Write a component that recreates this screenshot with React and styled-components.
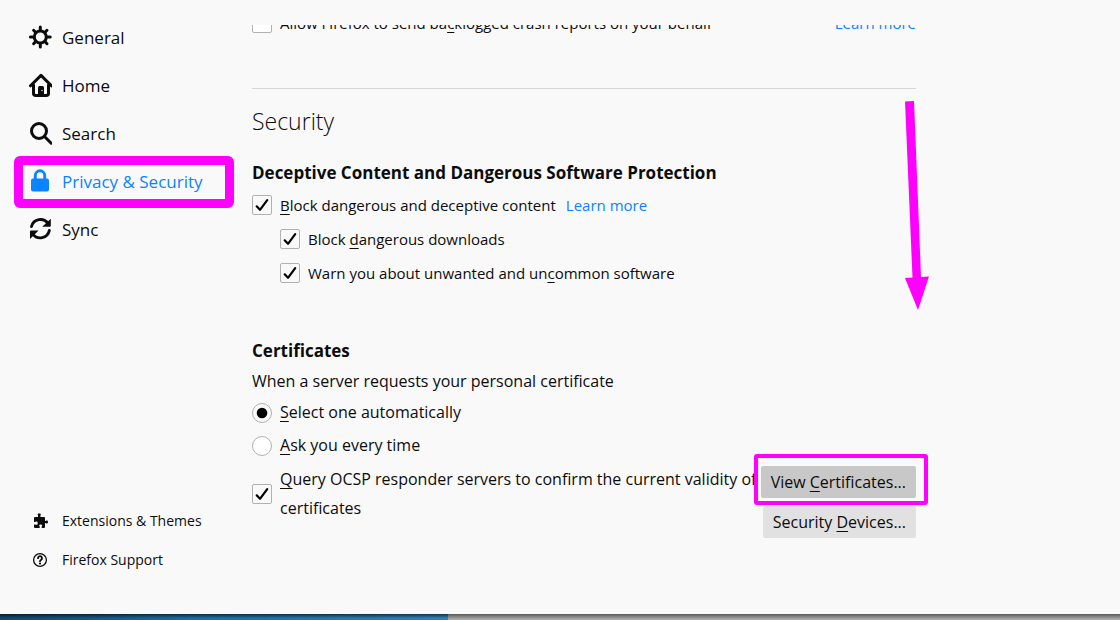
import React from "react";
import styled, { createGlobalStyle } from "styled-components";

const GlobalStyle = createGlobalStyle`
  * { box-sizing: border-box; }
  body {
    margin: 0;
    background: #f9f9fa;
    color: #0c0c0d;
    font-family: "Open Sans", "Noto Sans", sans-serif;
    font-size: 16px;
  }
  h1, h2, p { margin: 0; }
`;

const Page = styled.div`
  display: flex;
  flex-direction: column;
  min-height: 100vh;
`;

const Body = styled.div`
  display: flex;
  flex: 1;
`;

const Sidebar = styled.nav`
  display: flex;
  flex-direction: column;
  flex: 0 0 252px;
  padding: 13px 0 35px 28px;
`;

const NavLink = styled.a`
  position: relative;
  display: flex;
  align-items: center;
  gap: 10px;
  height: 48px;
  font-size: 17px;
  color: ${(p) => (p.$active ? "#0a84ff" : "#0c0c0d")};
  text-decoration: none;
`;

const FooterLinks = styled.div`
  margin-top: auto;
`;

const FooterLink = styled(NavLink)`
  height: 39px;
  font-size: 14px;
`;

const IconSlot = styled.span`
  display: flex;
  justify-content: center;
  width: 24px;
`;

const Highlight = styled.span`
  position: absolute;
  pointer-events: none;
  border: ${(p) => p.$thickness}px solid #ff00ff;
  border-radius: ${(p) => p.$radius}px;
  inset: ${(p) => p.$inset};
`;

const Main = styled.main`
  position: relative;
  flex: 1;
  max-width: 680px;
  margin-top: 25px;
  padding-right: 16px;
  overflow: hidden;
`;

const ScrolledContent = styled.div`
  margin-top: -19px;
`;

const Section = styled.section`
  padding-top: ${(p) => p.$top}px;
`;

const Row = styled.div`
  display: flex;
  align-items: center;
  gap: 10px;
  height: 34px;
  padding-left: ${(p) => (p.$indent ? 28 : 0)}px;
  font-size: 15px;
`;

const RadioRow = styled(Row)`
  height: 33px;
  font-size: 16px;
`;

const Label = styled.label`
  display: flex;
  align-items: center;
  gap: 8px;
  line-height: 29px;
`;

const Link = styled.a`
  color: #0a84ff;
  text-decoration: none;
  margin-left: ${(p) => (p.$end ? "auto" : "0")};
`;

const Key = styled.span`
  text-decoration: underline;
  text-decoration-thickness: 1px;
  text-underline-offset: 3px;
  text-decoration-skip-ink: none;
`;

const Control = styled.span`
  display: grid;
  flex: none;
  place-items: center;
  > * { grid-area: 1 / 1; }
  svg { pointer-events: none; }
`;

const ControlInput = styled.input`
  appearance: none;
  width: 20px;
  height: 20px;
  margin: 0;
  border: 1px solid #b1b1b1;
  border-radius: ${(p) => (p.type === "radio" ? "50%" : "2px")};
  background: #fff;
  & + svg { visibility: hidden; }
  &:checked { background: #f9f9fa; }
  &:checked + svg { visibility: visible; }
`;

const Divider = styled.hr`
  height: 1px;
  margin: 48px 0 0;
  border: 0;
  background: #d7d7db;
`;

const Title = styled.h1`
  padding: 15px 0 19px;
  font-size: 23px;
  font-weight: 300;
  line-height: 34px;
`;

const Heading = styled.h2`
  font-size: 17px;
  font-weight: 700;
  line-height: 31px;
`;

const Note = styled.p`
  line-height: 30px;
`;

const CertificateRow = styled.div`
  display: flex;
  align-items: flex-start;
  justify-content: space-between;
  padding-top: 3px;
`;

const Buttons = styled.div`
  display: flex;
  flex: none;
  flex-direction: column;
  align-items: flex-end;
  gap: 8px;
  padding-top: 1px;
`;

const Button = styled.button`
  position: relative;
  height: 32px;
  padding: 0 10px;
  border: 0;
  border-radius: 2px;
  background: ${(p) => (p.$pressed ? "#c8c8c8" : "#e1e1e2")};
  color: #0c0c0d;
  font: inherit;
`;

const Arrow = styled.svg`
  position: absolute;
  top: 76px;
  right: 3px;
`;

const DesktopEdge = styled.div`
  display: flex;
  height: 6px;
`;

const Wallpaper = styled.div`
  flex: 0 0 40%;
  background: linear-gradient(#0009, #0000 70%), linear-gradient(90deg, #15466b, #1c6da4 45%, #3181b4);
`;

const WindowShadow = styled.div`
  flex: 1;
  background: linear-gradient(#5a5a5a, #b5b3b3);
`;

const GearIcon = () => (
  <svg width="24" height="24" viewBox="0 0 24 24" fill="none" stroke="currentColor" strokeWidth="3" strokeLinecap="round">
    <circle cx="12.3" cy="12" r="6" />
    <path d="M12.3 5V2.1M12.3 19v2.9M5.3 12H2.4M19.3 12h2.9M7.4 7.1 5.6 5.3M17.2 7.1 19 5.3M7.4 16.9l-1.8 1.8M17.2 16.9l1.8 1.8" strokeWidth="3" />
  </svg>
);

const HomeIcon = () => (
  <svg width="24" height="24" viewBox="0 0 24 24" fill="none" stroke="currentColor" strokeLinecap="round" strokeLinejoin="round">
    <path d="M2.5 12.8 13 2.4l10.4 10.4" strokeWidth="3" />
    <path d="M5.500 12v8.200q0 2.300 2.300 2.300h10.400q2.300 0 2.300-2.300V12" strokeWidth="3" />
    <path d="M10 22v-7.500q0-1.500 1.500-1.500h3q1.500 0 1.500 1.500V22z" fill="currentColor" stroke="none" />
    <circle cx="14" cy="17.500" r=".7" fill="#f9f9fa" stroke="none" />
  </svg>
);

const SearchIcon = () => (
  <svg width="24" height="24" viewBox="0 0 24 24" fill="none" stroke="currentColor" strokeWidth="3" strokeLinecap="round">
    <circle cx="11" cy="10" r="7.500" />
    <path d="m16.500 15.500 6.700 6.700" />
  </svg>
);

const LockIcon = () => (
  <svg width="24" height="24" viewBox="0 0 24 24">
    <path d="M7.300 11V6.500a4.700 4.700 0 0 1 9.400 0V11" fill="none" stroke="currentColor" strokeWidth="2.900" />
    <rect x="3" y="9.500" width="18" height="13" rx="2" fill="currentColor" />
  </svg>
);

const SyncIcon = () => (
  <svg width="24" height="24" viewBox="0 0 24 24" fill="none" stroke="currentColor" strokeWidth="2.900" strokeLinecap="round">
    <path d="M3.500 9.500A9.200 9.200 0 0 1 20 6.500M21.300 13.500A9.200 9.200 0 0 1 4.800 17" />
    <path d="M22.800 1.700v7.100q0 1-1 1h-7.600zM2 22v-7.500q0-1 1-1h7.600z" fill="currentColor" stroke="none" />
  </svg>
);

const PuzzleIcon = () => (
  <svg width="16" height="16" viewBox="0 0 16 16" fill="currentColor">
    <path d="M6 4V2.500C5 1 6 .500 7.200.500s2.300.500 1.200 2V4H12q1 0 1 1v3h.6c1.500-1 2.400-.4 2.400 1s-.9 2-2.400 1H13v4q0 1-1 1H9.700v-1.400c1-1.400.3-2.200-1-2.200s-2 .8-1 2.200V15H3q-1 0-1-1v-2.600h1.200c1.400 1 2.500.3 2.500-1.200S4.600 8 3.200 9H2V5q0-1 1-1z" />
  </svg>
);

const HelpIcon = () => (
  <svg width="16" height="16" viewBox="0 0 16 16" fill="none" stroke="currentColor" strokeLinecap="round">
    <circle cx="8" cy="8" r="6.400" strokeWidth="1.300" />
    <path d="M6 6.200a2 2 0 1 1 3.200 1.600Q8 8.500 8 9.300" strokeWidth="1.800" />
    <circle cx="8" cy="11.500" r="1.100" fill="currentColor" stroke="none" />
  </svg>
);

const CheckMark = () => (
  <svg width="20" height="20" viewBox="0 0 20 20" fill="none" stroke="#000" strokeLinecap="round" strokeLinejoin="round">
    <path d="m4.700 11.300 3.300 3.500 7.200-9.600" strokeWidth="2.200" />
  </svg>
);

const RadioDot = () => (
  <svg width="20" height="20" viewBox="0 0 20 20">
    <circle cx="10" cy="10" r="5.300" fill="#000" />
  </svg>
);

function Choice({ type = "checkbox", checked, name, children }) {
  return (
    <Label>
      <Control>
        <ControlInput type={type} name={name} defaultChecked={checked} />
        {type === "radio" ? <RadioDot /> : <CheckMark />}
      </Control>
      <span>{children}</span>
    </Label>
  );
}

export default function App() {
  return (
    <Page>
      <GlobalStyle />
      <Body>
        <Sidebar>
          <NavLink href="#general"><IconSlot><GearIcon /></IconSlot>General</NavLink>
          <NavLink href="#home"><IconSlot><HomeIcon /></IconSlot>Home</NavLink>
          <NavLink href="#search"><IconSlot><SearchIcon /></IconSlot>Search</NavLink>
          <NavLink href="#privacy" $active>
            <IconSlot><LockIcon /></IconSlot>Privacy &amp; Security
            <Highlight $thickness={9} $radius={6} $inset="-1px 18px -3px -14px" />
          </NavLink>
          <NavLink href="#sync"><IconSlot><SyncIcon /></IconSlot>Sync</NavLink>
          <FooterLinks>
            <FooterLink href="#extensions"><IconSlot><PuzzleIcon /></IconSlot>Extensions &amp; Themes</FooterLink>
            <FooterLink href="#support"><IconSlot><HelpIcon /></IconSlot>Firefox Support</FooterLink>
          </FooterLinks>
        </Sidebar>
        <Main>
          <ScrolledContent>
            <Row>
              <Choice>Allow Firefox to send ba<Key>c</Key>klogged crash reports on your behalf</Choice>
              <Link href="#crash-reports" $end>Learn more</Link>
            </Row>
            <Divider />
            <Title>Security</Title>
            <Section $top={0}>
              <Heading>Deceptive Content and Dangerous Software Protection</Heading>
              <Row>
                <Choice checked><Key>B</Key>lock dangerous and deceptive content</Choice>
                <Link href="#phishing">Learn more</Link>
              </Row>
              <Row $indent><Choice checked>Block <Key>d</Key>angerous downloads</Choice></Row>
              <Row $indent><Choice checked>Warn you about unwanted and un<Key>c</Key>ommon software</Choice></Row>
            </Section>
            <Section $top={45}>
              <Heading>Certificates</Heading>
              <Note>When a server requests your personal certificate</Note>
              <RadioRow><Choice type="radio" name="certificate" checked><Key>S</Key>elect one automatically</Choice></RadioRow>
              <RadioRow><Choice type="radio" name="certificate"><Key>A</Key>sk you every time</Choice></RadioRow>
              <CertificateRow>
                <Choice checked><Key>Q</Key>uery OCSP responder servers to confirm the current validity of certificates</Choice>
                <Buttons>
                  <Button type="button" $pressed>
                    View <Key>C</Key>ertificates...
                    <Highlight $thickness={4} $radius={3} $inset="-12px -12px -7px -7px" />
                  </Button>
                  <Button type="button">Security <Key>D</Key>evices...</Button>
                </Buttons>
              </CertificateRow>
            </Section>
          </ScrolledContent>
          <Arrow width="24" height="210" viewBox="0 0 24 210" fill="#ff00ff" aria-hidden="true">
            <path d="M0 .500 9 0l7 176 8-.500L13 209 0 177l7.500-.500z" />
          </Arrow>
        </Main>
      </Body>
      <DesktopEdge>
        <Wallpaper />
        <WindowShadow />
      </DesktopEdge>
    </Page>
  );
}
